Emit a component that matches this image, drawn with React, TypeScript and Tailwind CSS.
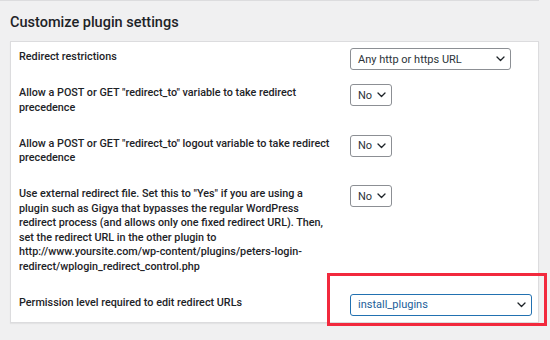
import React from "react";

const Chevron = ({ color = "#1d2327" }: { color?: string }) => (
  <svg width="9" height="6" viewBox="0 0 9 6" fill="none" className="shrink-0">
    <path d="M1 1l3.5 3.5L8 1" stroke={color} strokeWidth="1.3" strokeLinecap="round" strokeLinejoin="round" />
  </svg>
);

function Select({ value, width, active }: { value: string; width: string; active?: boolean }) {
  return (
    <div
      className={`${width} h-[22px] flex items-center justify-between pl-[7px] pr-[5px] rounded-[3px] bg-white border text-[11px] ${
        active ? "border-[#2271b1] text-[#22609a]" : "border-[#8c8f94] text-[#2c3338]"
      }`}
    >
      <span className="leading-none">{value}</span>
      <Chevron />
    </div>
  );
}

interface RowProps {
  label: string;
  select: React.ReactNode;
  pb?: string;
}

function Row({ label, select, pb = "pb-[13.5px]" }: RowProps) {
  return (
    <div className="flex">
      <div className={`w-[331px] shrink-0 pt-[8px] ${pb} pr-[16px] text-[10.8px] leading-[14.5px] font-medium text-[#1d2327]`}>
        {label}
      </div>
      <div className="pt-[6px]">{select}</div>
    </div>
  );
}

export default function App() {
  return (
    <div
      className="relative w-[550px] h-[340px] bg-[#f0f0f1] overflow-hidden"
      style={{ fontFamily: "Roboto, 'Liberation Sans', sans-serif" }}
    >
      {/* edge of the previous settings box */}
      <div className="w-[539px] h-px bg-[#dcdcde]" />

      <h2 className="ml-[10px] mt-[13px] text-[14.5px] leading-[18px] font-medium text-[#1d2327]">
        Customize plugin settings
      </h2>

      <div className="ml-[10px] mt-[9px] w-[529px] bg-white border border-[#dcdcde] shadow-[0_1px_1px_rgba(0,0,0,0.05)] pl-[8px]">
        <Row label="Redirect restrictions" select={<Select value="Any http or https URL" width="w-[161px]" />} />
        <Row
          label={'Allow a POST or GET "redirect_to" variable to take redirect precedence'}
          select={<Select value="No" width="w-[42px]" />}
        />
        <Row
          label={'Allow a POST or GET "redirect_to" logout variable to take redirect precedence'}
          select={<Select value="No" width="w-[42px]" />}
        />
        <Row
          label={
            'Use external redirect file. Set this to "Yes" if you are using a plugin such as Gigya that bypasses the regular WordPress redirect process (and allows only one fixed redirect URL). Then, set the redirect URL in the other plugin to http://www.yoursite.com/wp-content/plugins/peters-login-redirect/wplogin_redirect_control.php'
          }
          select={<Select value="No" width="w-[42px]" />}
        />
        <Row
          label="Permission level required to edit redirect URLs"
          pb="pb-[12px]"
          select={<Select value="install_plugins" width="w-[182px]" active />}
        />
      </div>

      {/* highlight annotation */}
      <div className="absolute left-[327px] top-[273px] w-[220px] h-[53px] border-[3px] border-[#f2293d]" />
    </div>
  );
}
